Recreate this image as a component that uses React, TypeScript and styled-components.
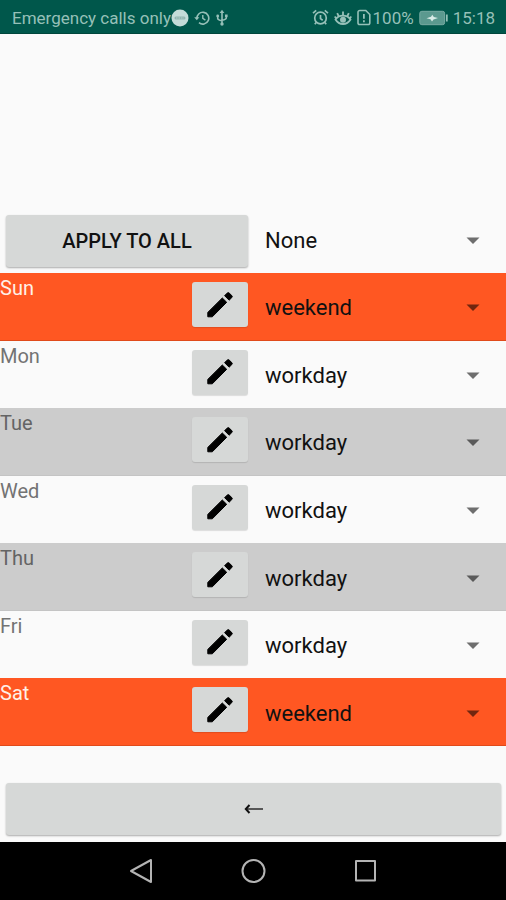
import React, { useState } from "react";
import styled, { createGlobalStyle } from "styled-components";

type Tone = "weekend" | "light" | "dark";

const tones: Record<Tone, { background: string; label: string; edge: string }> = {
  weekend: { background: "#ff5722", label: "#fff0e8", edge: "#e04a1a" },
  light: { background: "#fafafa", label: "#737373", edge: "#fafafa" },
  dark: { background: "#cccccc", label: "#646464", edge: "#c4c4c4" },
};

const days: { name: string; tone: Tone; plan: string }[] = [
  { name: "Sun", tone: "weekend", plan: "weekend" },
  { name: "Mon", tone: "light", plan: "workday" },
  { name: "Tue", tone: "dark", plan: "workday" },
  { name: "Wed", tone: "light", plan: "workday" },
  { name: "Thu", tone: "dark", plan: "workday" },
  { name: "Fri", tone: "light", plan: "workday" },
  { name: "Sat", tone: "weekend", plan: "weekend" },
];

const GlobalStyle = createGlobalStyle`
  *, *::before, *::after { box-sizing: border-box; }
  body { margin: 0; background: #fafafa; font-family: Roboto, "Liberation Sans", sans-serif; }
  button, select { font: inherit; color: inherit; }
`;

const Screen = styled.div`
  display: flex;
  flex-direction: column;
  min-height: 100vh;
`;

const StatusBar = styled.header`
  display: flex;
  align-items: center;
  justify-content: space-between;
  height: 34px;
  padding: 2px 11px 0 12px;
  background: #00574b;
  border-bottom: 1px solid #00463c;
  color: #96c0b8;
  font-size: 17px;
  line-height: 20px;
  white-space: nowrap;
`;

const StatusGroup = styled.div`
  display: flex;
  align-items: center;
`;

const StatusIcons = styled.div`
  display: flex;
  align-items: center;
  gap: 5px;
  margin-right: 2px;
`;

const Battery = styled.svg`
  margin: 0 5px;
`;

const Main = styled.main`
  display: flex;
  flex: 1;
  flex-direction: column;
`;

const Toolbar = styled.div`
  display: grid;
  grid-template-columns: 1fr 1fr;
  align-items: center;
  padding: 181px 0 6px;
`;

const RaisedButton = styled.button`
  height: 52px;
  margin: 0 5px 0 6px;
  border: 0;
  border-radius: 3px;
  background: #d6d8d7;
  box-shadow: 0 1px 2px rgba(0, 0, 0, 0.32);
  color: #111;
  font-size: 20px;
  font-weight: 500;
  line-height: 24px;
  cursor: pointer;
`;

const Days = styled.ul`
  display: grid;
  flex: 1;
  grid-auto-rows: 1fr;
  margin: 0;
  padding: 0;
  list-style: none;
`;

const DayRow = styled.li<{ $tone: Tone }>`
  display: grid;
  grid-template-columns: 1fr 1fr;
  min-height: 60px;
  background: ${({ $tone }) => tones[$tone].background};
  border-bottom: 1px solid ${({ $tone }) => tones[$tone].edge};
  color: ${({ $tone }) => tones[$tone].label};
`;

const DayCell = styled.div`
  display: flex;
  align-items: flex-start;
  justify-content: space-between;
  padding-right: 5px;
`;

const DayLabel = styled.label`
  font-size: 20px;
  line-height: 30px;
`;

const EditButton = styled.button`
  display: grid;
  place-items: center;
  width: 56px;
  height: 45px;
  margin-top: 9px;
  padding: 0;
  border: 0;
  border-radius: 3px;
  background: #d6d8d7;
  box-shadow: 0 1px 1px rgba(0, 0, 0, 0.12);
  color: #000;
  cursor: pointer;
`;

const Picker = styled.div<{ $inRow?: boolean }>`
  display: grid;
  align-items: center;
  padding-top: ${({ $inRow }) => ($inRow ? "4px" : "0")};

  > * {
    grid-area: 1 / 1;
  }
`;

const Select = styled.select`
  width: 100%;
  height: 100%;
  padding: 0 48px 0 12px;
  border: 0;
  border-radius: 0;
  appearance: none;
  background: transparent;
  color: #111;
  font-size: 22px;
  line-height: 28px;
  cursor: pointer;
`;

const Caret = styled.svg`
  justify-self: end;
  margin-right: 26px;
  pointer-events: none;
`;

const Footer = styled.footer`
  display: grid;
  padding: 37px 0 7px;
`;

const NavBar = styled.nav`
  display: flex;
  align-items: center;
  justify-content: center;
  gap: 84px;
  height: 58px;
  background: #000;
`;

const NavButton = styled.button`
  display: grid;
  place-items: center;
  width: 28px;
  height: 28px;
  padding: 0;
  border: 0;
  background: none;
  color: #b4b4b4;
  cursor: pointer;
`;

function DoNotDisturbIcon() {
  return (
    <svg width="18" height="18" viewBox="0 0 18 18" aria-hidden="true">
      <circle cx="9" cy="9" r="8.5" fill="#c4dcd8" />
      <path d="M5 9h8" stroke="#92b5af" strokeWidth="3" strokeLinecap="round" />
      <path d="M5 9h8" stroke="#b4d0cb" strokeWidth="1" strokeDasharray="1.5 1" />
    </svg>
  );
}

function HistoryIcon() {
  return (
    <svg width="16" height="16" viewBox="0 0 16 16" fill="none" stroke="currentColor" strokeWidth="1.6" aria-hidden="true">
      <path d="M3 9a5.9 5.9 0 1 1 2 3.7" />
      <path d="M.2 7.2h5.2L2.8 10.2z" fill="currentColor" stroke="none" />
      <path d="M8.8 5v3.4l2.6 1.7" strokeWidth="1.4" />
    </svg>
  );
}

function UsbIcon() {
  return (
    <svg width="14" height="18" viewBox="0 0 14 18" fill="none" stroke="currentColor" strokeWidth="1.6" aria-hidden="true">
      <path d="M7 3v12M2.7 7v2.2c0 1.6 1.2 2 4.3 2.5M11.3 6.5v2.2c0 1.6-1.2 2-4.3 2.5" />
      <path d="M7 .8 9.4 4H4.6z" fill="currentColor" stroke="none" />
      <circle cx="7" cy="15" r="1.7" fill="currentColor" stroke="none" />
      <circle cx="2.7" cy="6.9" r="1.4" fill="currentColor" stroke="none" />
      <path d="M10 5.500h2.600v2.600H10z" fill="currentColor" stroke="none" />
    </svg>
  );
}

function AlarmIcon() {
  return (
    <svg width="17" height="17" viewBox="0 0 17 17" fill="none" stroke="currentColor" strokeWidth="1.7" aria-hidden="true">
      <circle cx="8.5" cy="9" r="5.8" />
      <path d="M1 4.200 4.200 1.400M16 4.200l-3.200-2.800M8.500 6v3.600l2.200 1.600M4.400 13.300l-1.600 2M12.600 13.300l1.600 2" />
    </svg>
  );
}

function EyeIcon() {
  return (
    <svg width="18" height="16" viewBox="0 0 18 16" fill="none" stroke="currentColor" strokeWidth="1.8" aria-hidden="true">
      <path d="M1.500 9.500C3.300 7 5.800 5.700 9 5.700s5.700 1.300 7.500 3.800c-1.800 3-4.300 4.500-7.500 4.500s-5.700-1.500-7.500-4.500z" />
      <circle cx="9" cy="9.800" r="3" fill="currentColor" stroke="none" />
      <path d="M9 5.500V1.400M4.800 6.500 3.200 3.200M13.200 6.500l1.600-3.300M2.400 8.500.7 6.500M15.600 8.500l1.700-2" />
    </svg>
  );
}

function SimAlertIcon() {
  return (
    <svg width="14" height="17" viewBox="0 0 14 17" fill="none" stroke="currentColor" strokeWidth="1.6" aria-hidden="true">
      <path d="M2.800 1.500h6l4 4v8.500a1.500 1.500 0 0 1-1.500 1.500H2.500A1.500 1.500 0 0 1 1 14V3.300a1.800 1.800 0 0 1 1.800-1.800z" />
      <path d="M6.900 5v4.800M6.900 11.300v1.900" strokeWidth="1.800" />
    </svg>
  );
}

function BatteryIcon() {
  return (
    <Battery width="29" height="16" viewBox="0 0 29 16" aria-hidden="true">
      <rect x=".8" y="1.300" width="24.800" height="13.400" rx="2" fill="#5b998f" stroke="#79aba3" />
      <path d="M27.800 4.500v7" stroke="#96c0b8" strokeWidth="1.800" />
      <path d="M7.500 8.200 12 6.800 13.300 4.700 14.800 7 19 8l-4.500 1.500-1.500 2-1.500-2.200z" fill="#d9ebe7" />
    </Battery>
  );
}

function PencilIcon() {
  return (
    <svg width="28" height="28" viewBox="0 0 28 28" fill="currentColor" stroke="currentColor" strokeLinejoin="round" aria-hidden="true">
      <path d="M1.800 21.400 16.300 7l4.400 4.300L6.300 25.800H1.800z" />
      <path d="M18.600 4.700l2.600-2.600q1-1 2 0l2.600 2.500q1 1 0 2l-2.700 2.600z" />
    </svg>
  );
}

const planOptions = ["None", "workday", "weekend"];

function PlanPicker({ id, label, value, inRow, onChange }: {
  id: string;
  label?: string;
  value: string;
  inRow?: boolean;
  onChange: (value: string) => void;
}) {
  return (
    <Picker $inRow={inRow}>
      <Select id={id} aria-label={label} value={value} onChange={(event) => onChange(event.target.value)}>
        {planOptions.map((option) => (
          <option key={option}>{option}</option>
        ))}
      </Select>
      <Caret width="14" height="8" viewBox="0 0 14 8" aria-hidden="true">
        <path d="M.5.500h13L7 7z" fill="#000" fillOpacity=".56" />
      </Caret>
    </Picker>
  );
}

export default function App() {
  const [shared, setShared] = useState("None");
  const [plans, setPlans] = useState(days.map((day) => day.plan));

  return (
    <Screen>
      <GlobalStyle />
      <StatusBar>
        <StatusGroup>
          <span>Emergency calls only</span>
          <StatusIcons>
            <DoNotDisturbIcon />
            <HistoryIcon />
            <UsbIcon />
          </StatusIcons>
        </StatusGroup>
        <StatusGroup>
          <StatusIcons>
            <AlarmIcon />
            <EyeIcon />
            <SimAlertIcon />
          </StatusIcons>
          <span>100%</span>
          <BatteryIcon />
          <time>15:18</time>
        </StatusGroup>
      </StatusBar>
      <Main>
        <Toolbar>
          <RaisedButton type="button" onClick={() => setPlans(days.map(() => shared))}>
            APPLY TO ALL
          </RaisedButton>
          <PlanPicker id="plan-all" label="Plan for all days" value={shared} onChange={setShared} />
        </Toolbar>
        <Days>
          {days.map((day, index) => (
            <DayRow key={day.name} $tone={day.tone}>
              <DayCell>
                <DayLabel htmlFor={`plan-${day.name}`}>{day.name}</DayLabel>
                <EditButton type="button" aria-label={`Edit ${day.name}`}>
                  <PencilIcon />
                </EditButton>
              </DayCell>
              <PlanPicker
                id={`plan-${day.name}`}
                value={plans[index]}
                inRow
                onChange={(value) => setPlans(plans.map((plan, i) => (i === index ? value : plan)))}
              />
            </DayRow>
          ))}
        </Days>
        <Footer>
          <RaisedButton type="button" aria-label="Back">
            <svg width="20" height="14" viewBox="0 0 20 14" fill="none" stroke="currentColor" aria-hidden="true">
              <path d="M19 7H2" strokeWidth="1.300" />
              <path d="M5.500 3 1.800 7l3.700 4" strokeWidth="2" />
            </svg>
          </RaisedButton>
        </Footer>
      </Main>
      <NavBar>
        <NavButton type="button" aria-label="Navigate back">
          <svg width="28" height="28" viewBox="0 0 28 28" fill="none" stroke="currentColor" strokeWidth="2" strokeLinejoin="round">
            <path d="M24 3v22L4 14z" />
          </svg>
        </NavButton>
        <NavButton type="button" aria-label="Home">
          <svg width="28" height="28" viewBox="0 0 28 28" fill="none" stroke="currentColor" strokeWidth="2">
            <circle cx="14.500" cy="14" r="11" />
          </svg>
        </NavButton>
        <NavButton type="button" aria-label="Recent apps">
          <svg width="28" height="28" viewBox="0 0 28 28" fill="none" stroke="currentColor" strokeWidth="2" strokeLinejoin="round">
            <rect x="5" y="4" width="19" height="19.500" />
          </svg>
        </NavButton>
      </NavBar>
    </Screen>
  );
}
